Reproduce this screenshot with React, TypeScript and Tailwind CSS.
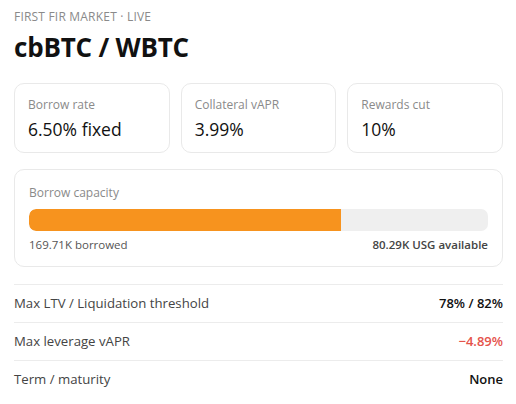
import React from 'react';

const stats = [
  { label: 'Borrow rate', value: '6.50% fixed' },
  { label: 'Collateral vAPR', value: '3.99%' },
  { label: 'Rewards cut', value: '10%' },
];

const rows = [
  { label: 'Max LTV / Liquidation threshold', value: '78% / 82%', tone: 'text-[#111]' },
  { label: 'Max leverage vAPR', value: '\u22124.89%', tone: 'text-[#e5534b]' },
  { label: 'Term / maturity', value: 'None', tone: 'text-[#111]' },
];

export default function App() {
  return (
    <div className="w-[516px] h-[404px] bg-white pl-[14px] pr-[13px] pt-[9px] font-['Open_Sans',sans-serif] overflow-hidden">
      <div className="text-[12px] leading-[16px] tracking-[0.2px] text-[#8a8a8a] uppercase">
        First Fir Market · Live
      </div>
      <h1 className="mt-[7px] text-[26px] leading-[30px] font-bold text-[#111] tracking-[-0.2px]">
        cbBTC / WBTC
      </h1>

      <div className="mt-[21px] grid grid-cols-3 gap-[11px]">
        {stats.map((s) => (
          <div
            key={s.label}
            className="h-[70px] rounded-[10px] border border-[#e9e9e9] px-[13px] pt-[12px]"
          >
            <div className="text-[12px] leading-[17px] text-[#8a8a8a]">{s.label}</div>
            <div className="mt-[5px] text-[17.5px] leading-[22px] text-[#111]">{s.value}</div>
          </div>
        ))}
      </div>

      <div className="mt-[16px] rounded-[10px] border border-[#e9e9e9] px-[14px] pt-[14px] pb-[13px]">
        <div className="text-[12px] leading-[17px] text-[#8a8a8a]">Borrow capacity</div>
        <div className="mt-[8px] h-[22px] w-full rounded-[7px] bg-[#efefef] overflow-hidden">
          <div className="h-full rounded-l-[7px] bg-[#f7931e]" style={{ width: `${(169.71 / 250) * 100}%` }} />
        </div>
        <div className="mt-[6px] flex items-center justify-between text-[11.5px] leading-[16px]">
          <span className="text-[#555]">169.71K borrowed</span>
          <span className="font-semibold text-[#444]">80.29K USG available</span>
        </div>
      </div>

      <div className="mt-[17px]">
        {rows.map((r) => (
          <div
            key={r.label}
            className="flex h-[38px] items-center justify-between border-t border-[#ececec]"
          >
            <span className="text-[13.2px] text-[#444]">{r.label}</span>
            <span className={`text-[13px] font-semibold ${r.tone}`}>{r.value}</span>
          </div>
        ))}
      </div>
    </div>
  );
}
